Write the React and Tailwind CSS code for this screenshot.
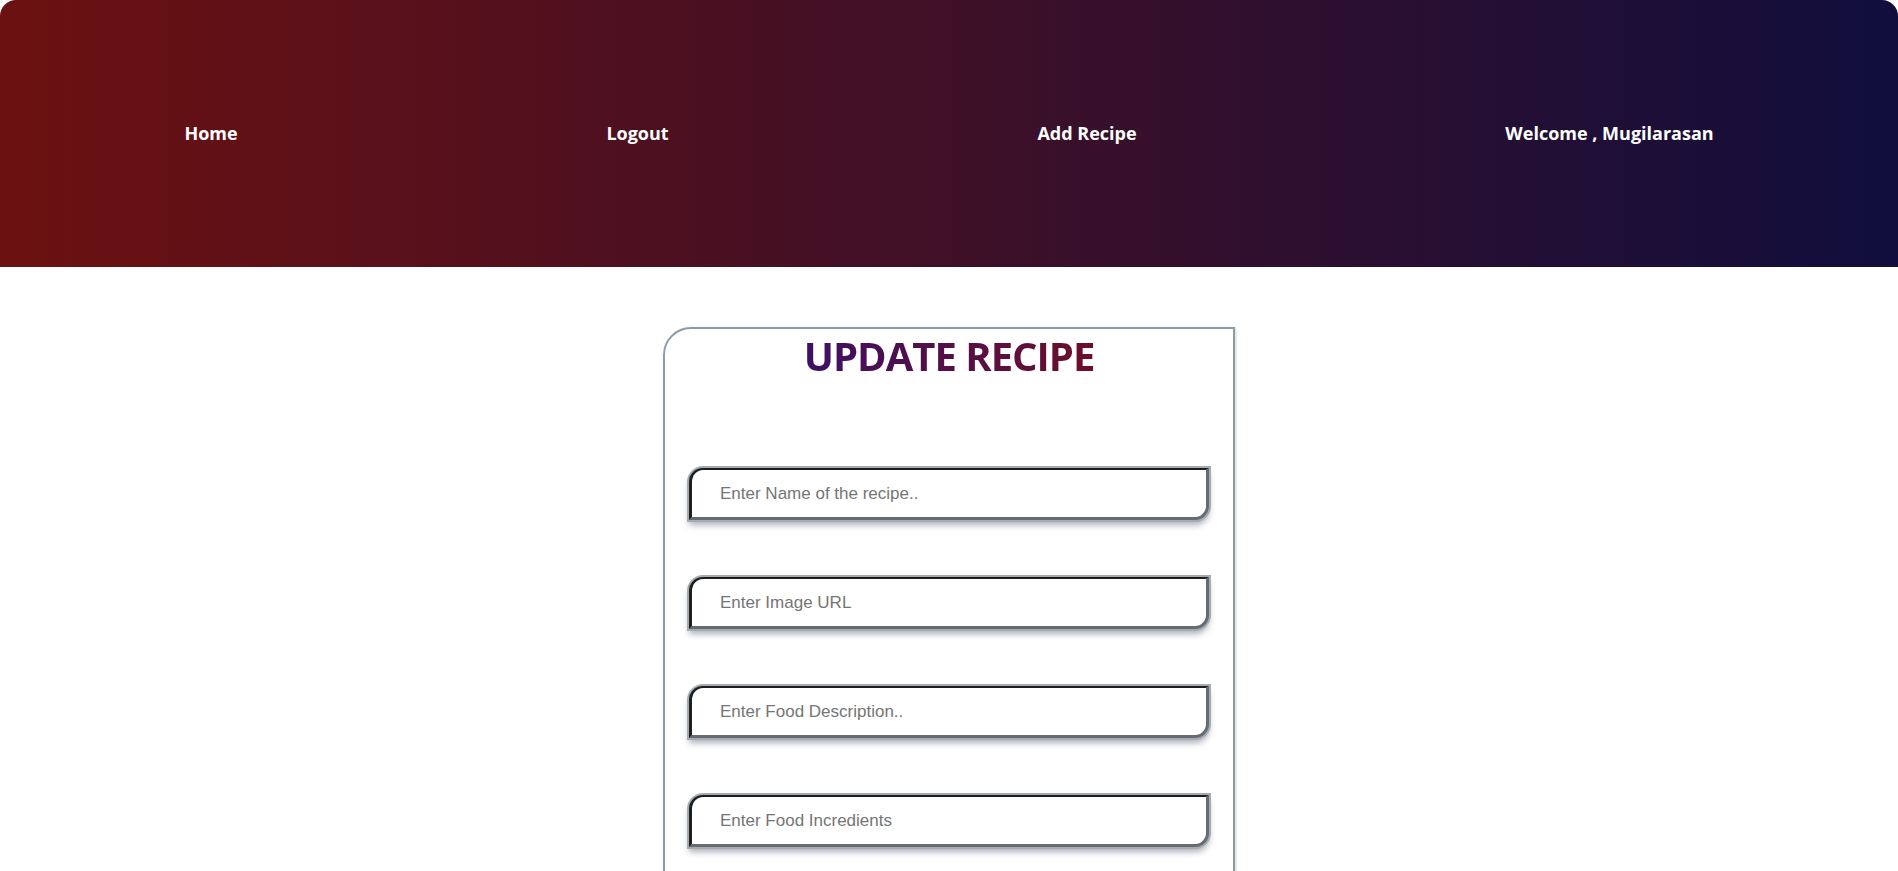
import React from 'react';

const NAV = ['Home', 'Logout', 'Add Recipe', 'Welcome , Mugilarasan'];
const FIELDS = [
  'Enter Name of the recipe..',
  'Enter Image URL',
  'Enter Food Description..',
  'Enter Food Incredients',
  'Enter Cooking Time',
];

export default function App() {
  return (
    <div className="min-h-screen bg-white">
      <nav className="h-[267px] rounded-t-[16px] bg-[linear-gradient(to_right,#6c1111,#110e3d)] flex items-center justify-around font-['Open_Sans',sans-serif]">
        {NAV.map(item => (
          <a key={item} className="text-white font-bold text-[18px] cursor-pointer">{item}</a>
        ))}
      </nav>

      <div className="flex justify-center pt-[60px]">
        <div className="w-[572px] border-2 border-[#8f9aa5] rounded-tl-[28px] shadow-[1px_1px_3px_rgba(120,130,140,0.35)] pb-[120px]">
          <h1 className="text-center font-['Open_Sans',sans-serif] font-bold text-[40px] tracking-[-1px] leading-[48px] mt-[3px] bg-[linear-gradient(to_right,#3d1063,#6b0f2a)] bg-clip-text text-transparent w-fit mx-auto">
            UPDATE RECIPE
          </h1>
          <div className="flex flex-col gap-[57px] px-[24px] mt-[88px]">
            {FIELDS.map(f => (
              <input
                key={f}
                type="text"
                placeholder={f}
                className="w-full h-[52px] bg-white pl-[28px] font-['Liberation_Sans',Arial,sans-serif] text-[17px] text-[#333] placeholder:text-[#757575] outline-none border-t-2 border-l-[3px] border-b-[3px] border-r-[3px] border-t-[#1e1e1e] border-l-[#1e1e1e] border-b-[#666b72] border-r-[#666b72] rounded-tl-[14px] rounded-br-[14px] shadow-[0_0_0_2px_#a3abb3,0_5px_6px_rgba(70,80,100,0.45)]"
              />
            ))}
          </div>
        </div>
      </div>
    </div>
  );
}
